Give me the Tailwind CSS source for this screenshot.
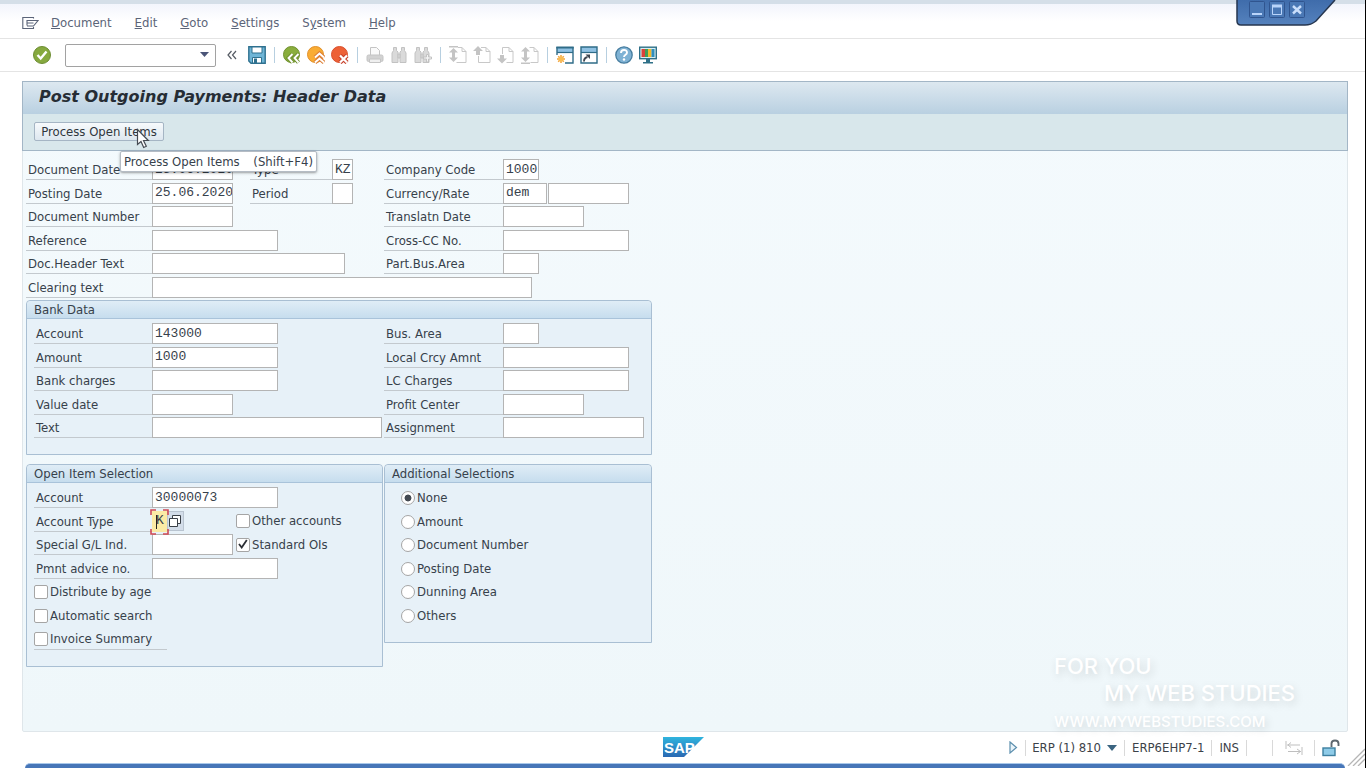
<!DOCTYPE html>
<html lang="en">
<head>
    <meta charset="UTF-8">
    <meta name="viewport" content="width=device-width, initial-scale=1.0">
    <title>Post Outgoing Payments: Header Data</title>
    <script src="https://cdn.jsdelivr.net/npm/@tailwindcss/browser@4"></script>
</head>
<body class="relative flex flex-col min-h-screen bg-white border-r border-black font-['DejaVu_Sans_Condensed','Noto_Sans',sans-serif] text-[13px] leading-[22px] text-[#37414b] overflow-x-hidden">

    <!-- Menu bar -->
    <nav class="flex items-center h-[39px] pt-1 pl-[22px] border-t-4 border-b border-t-[#d5dfe8] border-b-[#e4e4e4] bg-linear-to-b from-[#f3f5fc] to-white to-50% text-[#5b6478]">
        <button class="w-4 mr-[13px]" aria-label="System menu">
            <svg class="block" width="17" height="14" viewBox="0 0 17 14" fill="none" stroke="#5b6478" stroke-width="1.1"><path d="M11.500 2.500V1.500H.8v11h10.700V11"/><path d="M5 9.500v-5h11l-4.500 5.500H5M5 7h6.500"/></svg>
        </button>
        <div class="flex gap-[23px]">
            <a href="#"><u>D</u>ocument</a>
            <a href="#"><u>E</u>dit</a>
            <a href="#"><u>G</u>oto</a>
            <a href="#"><u>S</u>ettings</a>
            <a href="#">S<u>y</u>stem</a>
            <a href="#"><u>H</u>elp</a>
        </div>
    </nav>

    <!-- Window buttons -->
    <div class="absolute top-0 right-[29px] w-[100px] h-[28px]">
        <svg class="absolute inset-0" width="100" height="28" viewBox="0 0 100 28">
            <defs><linearGradient id="tab" x1="0" y1="0" x2="0" y2="1"><stop offset="0" stop-color="#3f6cab"/><stop offset="1" stop-color="#5582bd"/></linearGradient></defs>
            <path d="M1 0v21q0 4 4 4h64q6 0 11-4L99 0z" fill="url(#tab)"/>
            <path d="M1 0v21q0 4 4 4h64q6 0 11-4L99 0" fill="none" stroke="#26364f" stroke-width="1.500"/>
        </svg>
        <div class="relative flex gap-1 pt-px pl-[13px]">
            <button aria-label="Minimize"><svg class="block" width="16" height="17" viewBox="0 0 16 17"><rect x=".5" y=".5" width="15" height="16" rx="1" fill="#4a78b5" stroke="#30558f"/><path d="M3 13h10" stroke="#b9d4fa" stroke-width="2"/></svg></button>
            <button aria-label="Maximize"><svg class="block" width="16" height="17" viewBox="0 0 16 17"><rect x=".5" y=".5" width="15" height="16" rx="1" fill="#4a78b5" stroke="#30558f"/><path d="M3.500 5h9v8.500h-9z" fill="none" stroke="#b9d4fa"/><path d="M3 5h10" stroke="#b9d4fa" stroke-width="3"/></svg></button>
            <button aria-label="Close"><svg class="block" width="16" height="17" viewBox="0 0 16 17"><rect x=".5" y=".5" width="15" height="16" rx="1" fill="#4a78b5" stroke="#30558f"/><path d="M4 5l8 7.500M12 5l-8 7.500" stroke="#c9defb" stroke-width="2.400"/></svg></button>
        </div>
    </div>

    <!-- Standard toolbar -->
    <div class="flex items-center gap-[6px] h-[33px] pl-[33px] border-b border-[#e4e4e4]">
        <button aria-label="Enter"><svg class="block" width="18" height="18" viewBox="0 0 18 18"><circle cx="9" cy="9" r="8.500" fill="#86a93f" stroke="#6d8d33"/><path d="M4.500 9l3.200 3.500L13.500 5.500" fill="none" stroke="#fff" stroke-width="2.400"/></svg></button>
        <div class="flex items-center w-[151px] h-[23px] ml-2 border border-[#a2a2a2] rounded-xs bg-white">
            <input type="text" aria-label="Command" class="w-[133px] outline-none">
            <button aria-label="Command history"><svg class="block" width="12" height="6" viewBox="0 0 12 6"><path d="M1 0h9L5.500 5z" fill="#4b5578"/></svg></button>
        </div>
        <button class="mx-[5px]" aria-label="Collapse"><svg class="block" width="10" height="10" viewBox="0 0 10 10" fill="none" stroke="#555b63" stroke-width="1.200"><path d="M4.500 1L1 5l3.500 4M9 1L5.500 5 9 9"/></svg></button>
        <button aria-label="Save"><svg class="block" width="18" height="18" viewBox="0 0 18 18"><path d="M.8.800h16.400v16.400H3L.8 15z" fill="#6fb5d6" stroke="#2f718f" stroke-width="1.400"/><path d="M4 1h10v6H4z" fill="#fff" stroke="#2f718f"/><path d="M4.500 11.500h9V17h-9z" fill="#fff" stroke="#2f718f"/><path d="M6 12.500h3V17H6z" fill="#2f718f"/></svg></button>
        <span class="w-px h-4 mx-[2px] bg-[#b7cfe0]"></span>
        <button aria-label="Back"><svg class="block" width="18" height="18" viewBox="0 0 18 18"><circle cx="8.500" cy="8.500" r="8" fill="#8aae3d" stroke="#70912f"/><path d="M9.500 8L5.500 12l4 4.500M15.500 8l-4 4 4 4.500" fill="none" stroke="#70912f" stroke-width="4"/><path d="M9.500 8L5.500 12l4 4.500M15.500 8l-4 4 4 4.500" fill="none" stroke="#fff" stroke-width="1.900"/></svg></button>
        <button aria-label="Exit"><svg class="block" width="18" height="18" viewBox="0 0 18 18"><circle cx="8.500" cy="8.500" r="8" fill="#f9ac33" stroke="#e18f2a"/><path d="M8 11.500L12.500 7.500l4.500 4M8 16.500l4.500-4 4.500 4" fill="none" stroke="#dd7f35" stroke-width="4"/><path d="M8 11.500L12.500 7.500l4.500 4M8 16.500l4.500-4 4.500 4" fill="none" stroke="#fff" stroke-width="1.900"/></svg></button>
        <button aria-label="Cancel"><svg class="block" width="18" height="18" viewBox="0 0 18 18"><circle cx="8.500" cy="8.500" r="8" fill="#ed6137" stroke="#d94f2c"/><path d="M9 9.500l7 7M16 9.500l-7 7" stroke="#c8402a" stroke-width="4.500"/><path d="M9 9.500l7 7M16 9.500l-7 7" stroke="#fff" stroke-width="2.300"/></svg></button>
        <span class="w-px h-4 mx-[2px] bg-[#b7cfe0]"></span>
        <button aria-label="Print"><svg class="block" width="18" height="18" viewBox="0 0 18 18" stroke="#c4c4c4"><path d="M4.500 9V1.500h6l3 3V9" fill="#fafafa"/><rect x="1" y="9" width="16" height="6.500" rx="1.500" fill="#d2d2d2"/><path d="M3.500 13h11v3.500h-11z" fill="#efefef"/></svg></button>
        <button aria-label="Find"><svg class="block" width="18" height="18" viewBox="0 0 18 18" fill="#dadada" stroke="#c2c2c2"><path d="M3.500 1.500h3v3L8 6v10.500H2V7l1.500-2.500zM11.500 1.500h3v3L16 7v9.500h-6V6l1.500-1.500z"/><path d="M8 8h2v4H8z"/></svg></button>
        <button aria-label="Find next"><svg class="block" width="18" height="18" viewBox="0 0 18 18" fill="#dadada" stroke="#c2c2c2"><path d="M2.500 1.500h3v3L7 6v10.500H1V7l1.500-2.500zM10.500 1.500h3v3L15 7v9.500H9V6l1.500-1.500z"/><path d="M7 8h2v4H7z"/><path d="M12.500 8.500h2v2.500h3v2h-3v3h-2v-3h-3v-2h3z" fill="#f4f4f4"/></svg></button>
        <span class="w-px h-4 mx-[2px] bg-[#b7cfe0]"></span>
        <button aria-label="First page"><svg class="block" width="18" height="18" viewBox="0 0 18 18"><path d="M9 1.500h4l4 4v11H7.500" fill="#fff" stroke="#c8c8c8"/><path d="M13 1.500v4h4" fill="none" stroke="#c8c8c8"/><path d="M0 0h9v1.500H0zM4.500 2l4.500 4.500H6v5h3L4.500 16 0 11.500h3v-5H0z" fill="#c4c4c4"/></svg></button>
        <button aria-label="Previous page"><svg class="block" width="18" height="18" viewBox="0 0 18 18"><path d="M5.500 10v6.500H17v-11l-4-4H8" fill="#fff" stroke="#c8c8c8"/><path d="M13 1.500v4h4" fill="none" stroke="#c8c8c8"/><path d="M5 0l5 5H7v4H3V5H0z" fill="#c4c4c4"/></svg></button>
        <button aria-label="Next page"><svg class="block" width="18" height="18" viewBox="0 0 18 18"><path d="M5.500 8V1.500H12l4 4v11H9.500" fill="#fff" stroke="#c8c8c8"/><path d="M12 1.500v4h4" fill="none" stroke="#c8c8c8"/><path d="M3 9h4v3.500h3l-5 5-5-5h3z" fill="#c4c4c4"/></svg></button>
        <button aria-label="Last page"><svg class="block" width="18" height="18" viewBox="0 0 18 18"><path d="M8.500 1.500H13l4 4v11H9.500" fill="#fff" stroke="#c8c8c8"/><path d="M13 1.500v4h4" fill="none" stroke="#c8c8c8"/><path d="M4.500 1L9 5.500H6v6h3L4.500 16 0 11.500h3v-6H0zM0 16.500h9V18H0z" fill="#c4c4c4"/></svg></button>
        <span class="w-px h-4 mx-[2px] bg-[#b7cfe0]"></span>
        <button aria-label="New session"><svg class="block" width="18" height="18" viewBox="0 0 18 18"><path d="M1 1h16v6H1z" fill="#8fc1e3"/><path d="M1 1v8M17 1v16H9" fill="none" stroke="#2f6c88" stroke-width="1.400"/><path d="M.3 1.500h17.400" stroke="#2f6c88" stroke-width="2"/><path d="M1 6.500h16" stroke="#2f6c88" stroke-width="1.200"/><path d="M5 9v8M1 13h8M2.200 10.200l5.600 5.600M7.800 10.200l-5.600 5.600" stroke="#f3a53a" stroke-width="1.500"/><circle cx="5" cy="13" r="2.400" fill="#f9bd52"/></svg></button>
        <button aria-label="Create shortcut"><svg class="block" width="18" height="18" viewBox="0 0 18 18"><path d="M1 1h16v6H1z" fill="#8fc1e3"/><path d="M1 1h16v16H1z" fill="none" stroke="#2f6c88" stroke-width="1.400"/><path d="M1 6.500h16" stroke="#2f6c88" stroke-width="1.200"/><path d="M4 15.500c0-3 1-4 3.500-4.500" fill="none" stroke="#3f4650" stroke-width="1.800"/><path d="M5.500 8.500h4.500V13z" fill="#3f4650"/></svg></button>
        <span class="w-px h-4 mx-[2px] bg-[#b7cfe0]"></span>
        <button aria-label="Help"><svg class="block" width="18" height="18" viewBox="0 0 18 18"><circle cx="9" cy="9" r="8.200" fill="#7fb2d4" stroke="#477d9f" stroke-width="1.300"/><path d="M6 7c0-4 6-4 6-.5C12 9 9 8.500 9 11" fill="none" stroke="#fff" stroke-width="1.900"/><circle cx="9" cy="13.500" r="1.200" fill="#fff"/></svg></button>
        <button aria-label="Customize local layout"><svg class="block" width="18" height="18" viewBox="0 0 18 18"><rect x=".7" y="1.200" width="16.600" height="11.500" fill="#d8eef2" stroke="#2f7088" stroke-width="1.400"/><path d="M2.500 3h3.500v8H2.500z" fill="#d9413a"/><path d="M6 3h3v8H6z" fill="#3f9d57"/><path d="M9 3h3.500v8H9z" fill="#f2b92c"/><path d="M12.500 3h3v8h-3z" fill="#2f8fbe"/><path d="M7 13h4v3h3v1.500H4V16h3z" fill="#2f7088"/></svg></button>
    </div>

    <!-- Screen area -->
    <main class="flex-1 flex flex-col mt-[9px] ml-[22px] mr-[17px] border border-[#dfe6ea] rounded-xs bg-linear-to-b from-[#f4fafd] to-[#eff7fa]">
        <header class="-mx-px -mt-px border border-[#a3b6c6]">
            <h1 class="flex items-center h-[32px] pl-4 pb-[2px] bg-linear-to-b from-[#dde8f0] to-[#b9d0e1] font-['DejaVu_Sans',sans-serif] text-[16px] font-bold italic text-[#262d35]">Post Outgoing Payments: Header Data</h1>
            <div class="relative h-[36px] pt-[8px] pl-[11px] bg-[#d8e7eb]">
                <button class="block h-[19px] w-[130px] leading-[17px] border border-[#a5b5c4] rounded-xs bg-linear-to-b from-[#f7fafc] to-[#dde7ef] text-[#30363d]">Process Open Items</button>
                <svg class="absolute z-20 left-[113px] top-[14px]" width="14" height="21" viewBox="0 0 14 21"><path d="M1.500 1.500v15l3.500-3 2.700 6 2.600-1.200L7.500 12.500h4.800z" fill="#fff" stroke="#444a52" stroke-width="1.200"/></svg>
                <div role="tooltip" class="absolute z-10 left-[97px] top-[37px] w-[197px] h-[21px] flex items-center justify-between px-[3px] border border-[#b5bcc4] rounded-xs bg-white shadow-sm shadow-black/30"><span>Process Open Items</span><span>(Shift+F4)</span></div>
            </div>
        </header>

        <form class="pl-[3px] pt-[8px] flex-1">
            <!-- Document header -->
            <div class="flex">
                <div class="grid grid-rows-5 h-[118px] w-[358px]">
                    <div class="flex">
                        <label for="docDate" class="w-[126px] h-[21px] pl-[2px] border-b border-[#c3c9ce]">Document Date</label>
                        <input id="docDate" value="25.06.2020" class="w-[81px] h-[21px] pl-[2px] border border-[#b4b4b4] bg-white font-['Liberation_Mono',monospace]">
                        <label for="docType" class="ml-[17px] w-[82px] h-[21px] pl-[2px] border-b border-[#c3c9ce]">Type</label>
                        <input id="docType" value="KZ" class="w-[21px] h-[21px] pl-[2px] border border-[#b4b4b4] bg-white font-['Liberation_Mono',monospace]">
                    </div>
                    <div class="flex">
                        <label for="postDate" class="w-[126px] h-[21px] pl-[2px] border-b border-[#c3c9ce]">Posting Date</label>
                        <input id="postDate" value="25.06.2020" class="w-[81px] h-[21px] pl-[2px] border border-[#b4b4b4] bg-white font-['Liberation_Mono',monospace]">
                        <label for="period" class="ml-[17px] w-[82px] h-[21px] pl-[2px] border-b border-[#c3c9ce]">Period</label>
                        <input id="period" class="w-[21px] h-[21px] pl-[2px] border border-[#b4b4b4] bg-white font-['Liberation_Mono',monospace]">
                    </div>
                    <div class="flex">
                        <label for="docNo" class="w-[126px] h-[21px] pl-[2px] border-b border-[#c3c9ce]">Document Number</label>
                        <input id="docNo" class="w-[81px] h-[21px] pl-[2px] border border-[#b4b4b4] bg-white font-['Liberation_Mono',monospace]">
                    </div>
                    <div class="flex">
                        <label for="reference" class="w-[126px] h-[21px] pl-[2px] border-b border-[#c3c9ce]">Reference</label>
                        <input id="reference" class="w-[126px] h-[21px] pl-[2px] border border-[#b4b4b4] bg-white font-['Liberation_Mono',monospace]">
                    </div>
                    <div class="flex">
                        <label for="headerText" class="w-[126px] h-[21px] pl-[2px] border-b border-[#c3c9ce]">Doc.Header Text</label>
                        <input id="headerText" class="w-[193px] h-[21px] pl-[2px] border border-[#b4b4b4] bg-white font-['Liberation_Mono',monospace]">
                    </div>
                </div>
                <div class="grid grid-rows-5 h-[118px]">
                    <div class="flex">
                        <label for="company" class="w-[119px] h-[21px] pl-[2px] border-b border-[#c3c9ce]">Company Code</label>
                        <input id="company" value="1000" class="w-[36px] h-[21px] pl-[2px] border border-[#b4b4b4] bg-white font-['Liberation_Mono',monospace]">
                    </div>
                    <div class="flex">
                        <label for="currency" class="w-[119px] h-[21px] pl-[2px] border-b border-[#c3c9ce]">Currency/Rate</label>
                        <input id="currency" value="dem" class="w-[44px] h-[21px] pl-[2px] border border-[#b4b4b4] bg-white font-['Liberation_Mono',monospace]">
                        <input aria-label="Rate" class="ml-[1px] w-[81px] h-[21px] pl-[2px] border border-[#b4b4b4] bg-white font-['Liberation_Mono',monospace]">
                    </div>
                    <div class="flex">
                        <label for="transDate" class="w-[119px] h-[21px] pl-[2px] border-b border-[#c3c9ce]">Translatn Date</label>
                        <input id="transDate" class="w-[81px] h-[21px] pl-[2px] border border-[#b4b4b4] bg-white font-['Liberation_Mono',monospace]">
                    </div>
                    <div class="flex">
                        <label for="crossCc" class="w-[119px] h-[21px] pl-[2px] border-b border-[#c3c9ce]">Cross-CC No.</label>
                        <input id="crossCc" class="w-[126px] h-[21px] pl-[2px] border border-[#b4b4b4] bg-white font-['Liberation_Mono',monospace]">
                    </div>
                    <div class="flex">
                        <label for="partArea" class="w-[119px] h-[21px] pl-[2px] border-b border-[#c3c9ce]">Part.Bus.Area</label>
                        <input id="partArea" class="w-[36px] h-[21px] pl-[2px] border border-[#b4b4b4] bg-white font-['Liberation_Mono',monospace]">
                    </div>
                </div>
            </div>
            <div class="flex h-[23px]">
                <label for="clearing" class="w-[126px] h-[21px] pl-[2px] border-b border-[#c3c9ce]">Clearing text</label>
                <input id="clearing" class="w-[380px] h-[21px] pl-[2px] border border-[#b4b4b4] bg-white font-['Liberation_Mono',monospace]">
            </div>

            <!-- Bank data -->
            <section class="w-[626px] border border-[#a9bfd3] rounded-t-sm bg-[#e7f1f8] pb-[13px]">
                <h2 class="h-[18px] pl-[7px] leading-[17px] border-b border-[#a9c3da] rounded-t-sm bg-linear-to-b from-[#e0edf6] to-[#c6ddee]">Bank Data</h2>
                <div class="flex pt-[4px] pl-[7px]">
                    <div class="grid grid-rows-5 h-[118px] w-[350px]">
                        <div class="flex">
                            <label for="bankAccount" class="w-[118px] h-[21px] pl-[2px] border-b border-[#c3c9ce]">Account</label>
                            <input id="bankAccount" value="143000" class="w-[126px] h-[21px] pl-[2px] border border-[#b4b4b4] bg-white font-['Liberation_Mono',monospace]">
                        </div>
                        <div class="flex">
                            <label for="amount" class="w-[118px] h-[21px] pl-[2px] border-b border-[#c3c9ce]">Amount</label>
                            <input id="amount" value="1000" class="w-[126px] h-[21px] pl-[2px] border border-[#b4b4b4] bg-white font-['Liberation_Mono',monospace]">
                        </div>
                        <div class="flex">
                            <label for="charges" class="w-[118px] h-[21px] pl-[2px] border-b border-[#c3c9ce]">Bank charges</label>
                            <input id="charges" class="w-[126px] h-[21px] pl-[2px] border border-[#b4b4b4] bg-white font-['Liberation_Mono',monospace]">
                        </div>
                        <div class="flex">
                            <label for="valueDate" class="w-[118px] h-[21px] pl-[2px] border-b border-[#c3c9ce]">Value date</label>
                            <input id="valueDate" class="w-[81px] h-[21px] pl-[2px] border border-[#b4b4b4] bg-white font-['Liberation_Mono',monospace]">
                        </div>
                        <div class="flex">
                            <label for="text" class="w-[118px] h-[21px] pl-[2px] border-b border-[#c3c9ce]">Text</label>
                            <input id="text" class="w-[230px] h-[21px] pl-[2px] border border-[#b4b4b4] bg-white font-['Liberation_Mono',monospace]">
                        </div>
                    </div>
                    <div class="grid grid-rows-5 h-[118px]">
                        <div class="flex">
                            <label for="busArea" class="w-[119px] h-[21px] pl-[2px] border-b border-[#c3c9ce]">Bus. Area</label>
                            <input id="busArea" class="w-[36px] h-[21px] pl-[2px] border border-[#b4b4b4] bg-white font-['Liberation_Mono',monospace]">
                        </div>
                        <div class="flex">
                            <label for="localAmount" class="w-[119px] h-[21px] pl-[2px] border-b border-[#c3c9ce]">Local Crcy Amnt</label>
                            <input id="localAmount" class="w-[126px] h-[21px] pl-[2px] border border-[#b4b4b4] bg-white font-['Liberation_Mono',monospace]">
                        </div>
                        <div class="flex">
                            <label for="lcCharges" class="w-[119px] h-[21px] pl-[2px] border-b border-[#c3c9ce]">LC Charges</label>
                            <input id="lcCharges" class="w-[126px] h-[21px] pl-[2px] border border-[#b4b4b4] bg-white font-['Liberation_Mono',monospace]">
                        </div>
                        <div class="flex">
                            <label for="profit" class="w-[119px] h-[21px] pl-[2px] border-b border-[#c3c9ce]">Profit Center</label>
                            <input id="profit" class="w-[81px] h-[21px] pl-[2px] border border-[#b4b4b4] bg-white font-['Liberation_Mono',monospace]">
                        </div>
                        <div class="flex">
                            <label for="assignment" class="w-[119px] h-[21px] pl-[2px] border-b border-[#c3c9ce]">Assignment</label>
                            <input id="assignment" class="w-[141px] h-[21px] pl-[2px] border border-[#b4b4b4] bg-white font-['Liberation_Mono',monospace]">
                        </div>
                    </div>
                </div>
            </section>

            <div class="flex items-start gap-[1px] mt-[9px]">
                <!-- Open item selection -->
                <section class="w-[357px] border border-[#a9bfd3] rounded-t-sm bg-[#e7f1f8] pb-[14px]">
                    <h2 class="h-[18px] pl-[7px] leading-[17px] border-b border-[#a9c3da] rounded-t-sm bg-linear-to-b from-[#e0edf6] to-[#c6ddee]">Open Item Selection</h2>
                    <div class="grid grid-rows-7 h-[169px] pt-[4px] pl-[7px]">
                        <div class="flex">
                            <label for="openAccount" class="w-[118px] h-[21px] pl-[2px] border-b border-[#c3c9ce]">Account</label>
                            <input id="openAccount" value="30000073" class="w-[126px] h-[21px] pl-[2px] border border-[#b4b4b4] bg-white font-['Liberation_Mono',monospace]">
                        </div>
                        <div class="flex">
                            <label for="accountType" class="w-[118px] h-[21px] pl-[2px] border-b border-[#c3c9ce]">Account Type</label>
                            <div class="relative w-[15px] h-[21px]">
                                <input id="accountType" value="K" class="block w-[15px] h-[21px] pl-[4px] bg-[#fbeaa5] font-['Liberation_Mono',monospace] outline-none">
                                <svg class="absolute -left-[2px] -top-[2px]" width="19" height="26" viewBox="0 0 19 26" fill="none" stroke="#cf4a54" stroke-width="1.600"><path d="M1 6V1h5M13 1h5v5M1 20v5h5M13 25h5v-5"/><path d="M6.500 6v14" stroke="#222" stroke-width="1"/></svg>
                            </div>
                            <button type="button" aria-label="Possible entries" class="w-[17px] h-[20px] border border-[#b9c4d0] bg-[#d3dde9]"><svg class="block" width="14" height="14" viewBox="0 0 14 14" fill="#fff" stroke="#3a4047"><path d="M4.500 1.500h8v8h-8z"/><path d="M1.500 4.500h8v8h-8z"/></svg></button>
                            <label class="flex items-center h-[21px] ml-[52px] gap-[2px]"><input type="checkbox" class="appearance-none w-[14px] h-[14px] border border-[#a5a5a5] rounded-xs bg-white">Other accounts</label>
                        </div>
                        <div class="flex">
                            <label for="specialGl" class="w-[118px] h-[21px] pl-[2px] border-b border-[#c3c9ce]">Special G/L Ind.</label>
                            <input id="specialGl" class="w-[81px] h-[21px] pl-[2px] border border-[#b4b4b4] bg-white font-['Liberation_Mono',monospace]">
                            <label class="relative flex items-center h-[21px] ml-[3px] gap-[2px]"><input type="checkbox" checked class="peer appearance-none w-[14px] h-[14px] border border-[#a5a5a5] rounded-xs bg-white"><svg class="absolute left-[2px] top-[5px] hidden peer-checked:block" width="10" height="10" viewBox="0 0 10 10" fill="none" stroke="#2b2f35" stroke-width="1.800"><path d="M1 5l2.700 3.500L8.800 1"/></svg>Standard OIs</label>
                        </div>
                        <div class="flex">
                            <label for="advice" class="w-[118px] h-[21px] pl-[2px] border-b border-[#c3c9ce]">Pmnt advice no.</label>
                            <input id="advice" class="w-[126px] h-[21px] pl-[2px] border border-[#b4b4b4] bg-white font-['Liberation_Mono',monospace]">
                        </div>
                        <label class="flex items-center h-[22px] gap-[2px]"><input type="checkbox" class="appearance-none w-[14px] h-[14px] border border-[#a5a5a5] rounded-xs bg-white">Distribute by age</label>
                        <label class="flex items-center h-[22px] gap-[2px]"><input type="checkbox" class="appearance-none w-[14px] h-[14px] border border-[#a5a5a5] rounded-xs bg-white">Automatic search</label>
                        <label class="flex items-center h-[22px] w-[133px] gap-[2px] border-b border-[#c3c9ce]"><input type="checkbox" class="appearance-none w-[14px] h-[14px] border border-[#a5a5a5] rounded-xs bg-white">Invoice Summary</label>
                    </div>
                </section>

                <!-- Additional selections -->
                <section class="w-[268px] border border-[#a9bfd3] rounded-t-sm bg-[#e7f1f8] pb-[14px]">
                    <h2 class="h-[18px] pl-[7px] leading-[17px] border-b border-[#a9c3da] rounded-t-sm bg-linear-to-b from-[#e0edf6] to-[#c6ddee]">Additional Selections</h2>
                    <div class="grid grid-rows-6 h-[145px] pt-[4px] pl-4">
                        <label class="flex items-center h-[22px] gap-[2px]"><input type="radio" name="sel" checked class="appearance-none w-[14px] h-[14px] border border-[#a5a5a5] rounded-full bg-white checked:bg-radial checked:from-[#444a52] checked:from-35% checked:to-white checked:to-45%">None</label>
                        <label class="flex items-center h-[22px] gap-[2px]"><input type="radio" name="sel" class="appearance-none w-[14px] h-[14px] border border-[#a5a5a5] rounded-full bg-white checked:bg-radial checked:from-[#444a52] checked:from-35% checked:to-white checked:to-45%">Amount</label>
                        <label class="flex items-center h-[22px] gap-[2px]"><input type="radio" name="sel" class="appearance-none w-[14px] h-[14px] border border-[#a5a5a5] rounded-full bg-white checked:bg-radial checked:from-[#444a52] checked:from-35% checked:to-white checked:to-45%">Document Number</label>
                        <label class="flex items-center h-[22px] gap-[2px]"><input type="radio" name="sel" class="appearance-none w-[14px] h-[14px] border border-[#a5a5a5] rounded-full bg-white checked:bg-radial checked:from-[#444a52] checked:from-35% checked:to-white checked:to-45%">Posting Date</label>
                        <label class="flex items-center h-[22px] gap-[2px]"><input type="radio" name="sel" class="appearance-none w-[14px] h-[14px] border border-[#a5a5a5] rounded-full bg-white checked:bg-radial checked:from-[#444a52] checked:from-35% checked:to-white checked:to-45%">Dunning Area</label>
                        <label class="flex items-center h-[22px] gap-[2px]"><input type="radio" name="sel" class="appearance-none w-[14px] h-[14px] border border-[#a5a5a5] rounded-full bg-white checked:bg-radial checked:from-[#444a52] checked:from-35% checked:to-white checked:to-45%">Others</label>
                    </div>
                </section>
            </div>
        </form>
    </main>

    <!-- Watermark -->
    <div class="absolute right-[70px] bottom-[36px] w-[241px] font-['Inter',sans-serif] font-medium text-white [text-shadow:2px_3px_8px_rgb(0_0_0/0.15)]">
        <p class="text-[22px] leading-[27px]">FOR YOU</p>
        <p class="text-[22px] leading-[27px] text-right">MY WEB STUDIES</p>
        <p class="text-[15px] leading-[20px] mt-[5px]">WWW.MYWEBSTUDIES.COM</p>
    </div>

    <!-- Status bar -->
    <footer class="relative flex items-center justify-end h-[31px] pr-[25px] text-[#3c4249]">
        <svg class="absolute left-[662px] top-[4px]" width="43" height="22" viewBox="0 0 43 22">
            <defs><linearGradient id="sap" x1="0" y1="0" x2="0" y2="1"><stop offset="0" stop-color="#2fb4de"/><stop offset="1" stop-color="#2a68b2"/></linearGradient></defs>
            <path d="M1 1h41L22 21H1z" fill="url(#sap)"/>
            <text x="2" y="17" font-family="Liberation Sans, sans-serif" font-size="15" font-weight="bold" fill="#fff">SAP</text>
        </svg>
        <button class="mr-[7px]" aria-label="Show status"><svg class="block" width="9" height="13" viewBox="0 0 9 13"><path d="M1 1l6.500 5.500L1 12z" fill="#eaf4fa" stroke="#5c8fae" stroke-width="1.200"/></svg></button>
        <span class="w-px h-4 bg-[#d9d9d9]"></span>
        <button class="flex items-center gap-[6px] pl-[6px]">ERP (1) 810 <svg width="10" height="6" viewBox="0 0 10 6"><path d="M0 0h10L5 6z" fill="#3b6480"/></svg></button>
        <span class="w-px h-4 mx-[7px] bg-[#d9d9d9]"></span>
        <span>ERP6EHP7-1</span>
        <span class="w-px h-4 mx-[7px] bg-[#d9d9d9]"></span>
        <span>INS</span>
        <span class="w-px h-4 mx-[7px] bg-[#d9d9d9]"></span>
        <span class="w-px h-4 ml-[18px] mr-[12px] bg-[#d9d9d9]"></span>
        <svg width="18" height="14" viewBox="0 0 18 14" fill="none" stroke="#bfbfbf"><path d="M1 0v8M17 6v8M2 4h13M3 10.500h13"/><path d="M6 1.500L3 4l3 2.500M12 8l3.500 2.500-3.500 2.500"/></svg>
        <span class="w-px h-4 ml-[11px] mr-[7px] bg-[#d9d9d9]"></span>
        <svg width="18" height="18" viewBox="0 0 18 18"><rect x="1" y="9" width="12" height="7.500" fill="#8ecbe8" stroke="#3d7fa0" stroke-width="1.400"/><path d="M9.500 8V4.500q0-3 3.500-3t3.500 3V7" fill="none" stroke="#5d666e" stroke-width="1.900"/></svg>
        <svg class="absolute right-0 bottom-[-3px]" width="18" height="19" viewBox="0 0 18 19" stroke="#b5b5b5" stroke-width="1.300"><path d="M1 19L18 2M6 19L18 7M11 19l7-7"/></svg>
    </footer>
    <div class="h-[5px] ml-[25px] mr-[20px] rounded-t-full border-t border-[#a9c8ea] bg-[#4776b8]"></div>

</body>
</html>
